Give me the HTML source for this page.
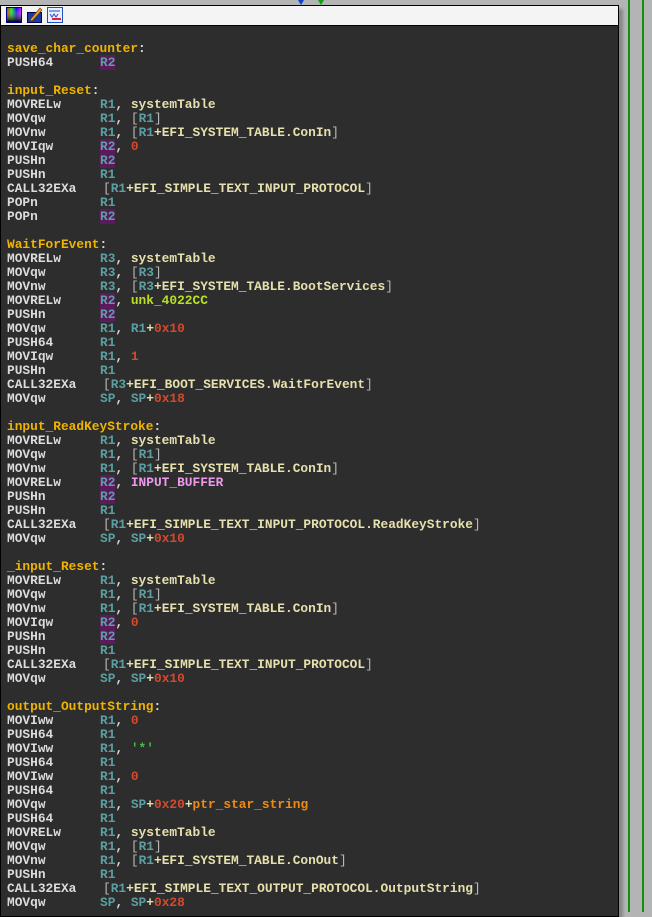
<!DOCTYPE html>
<html><head><meta charset="utf-8"><style>
html,body{margin:0;padding:0;width:652px;height:912px;overflow:hidden;background:#b4b4b4;}
#win{position:absolute;left:0;top:5px;width:617px;height:910px;border:1px solid #000;background:#2d2d2d;box-shadow:4px 4px 3px rgba(0,0,0,0.25);overflow:hidden;}
#bar{position:absolute;left:0;top:0;width:617px;height:19px;background:#f4f4f4;border-bottom:1px solid #000;}
.g{position:absolute;top:0;width:2px;height:912px;background:#109010;}
#code{position:absolute;left:6px;top:36px;font-family:"Liberation Mono",monospace;font-weight:bold;font-size:12.85px;line-height:14px;color:#dcdcdc;}
.ln{height:14px;white-space:pre;}
.m{display:inline-block;width:93px;}
.c{padding-left:3px;}
.l{color:#f0b400;}
.r{color:#5c9fa2;}
.p{color:#5c9fa2;background:#5a1a5c;}
.n{color:#d5492c;}
.s{color:#e6e0ae;}
.o{color:#f08a10;}
.k{color:#ee99ee;}
.u{color:#b8e020;}
.q{color:#40c040;}
.w{color:#b8b8b8;font-weight:normal;}
</style></head><body>
<div class="g" style="left:628px"></div>
<div class="g" style="left:642px"></div>
<div style="position:absolute;left:298px;top:0;width:0;height:0;border-left:3px solid transparent;border-right:3px solid transparent;border-top:5px solid #1040d0"></div>
<div style="position:absolute;left:318px;top:0;width:0;height:0;border-left:3px solid transparent;border-right:3px solid transparent;border-top:5px solid #10a010"></div>
<div id="win"><div id="bar">
<svg width="70" height="19" style="position:absolute;left:0;top:0">
<defs><linearGradient id="h" x1="0" x2="1"><stop offset="0" stop-color="#f00"/><stop offset=".33" stop-color="#0f0"/><stop offset=".66" stop-color="#00f"/><stop offset="1" stop-color="#f0f"/></linearGradient><linearGradient id="v" x1="0" y1="0" x2="0" y2="1"><stop offset="0" stop-color="#fff" stop-opacity="0"/><stop offset="1" stop-color="#000"/></linearGradient></defs>
<rect x="5.5" y="1.5" width="15" height="15" fill="url(#h)" stroke="#000080"/>
<rect x="6" y="2" width="14" height="14" fill="url(#v)"/>
<rect x="26.5" y="6.5" width="14" height="10" fill="#1a3aa0" stroke="#000060"/>
<path d="M29 14 L39 2 L41 4 L31 15 Z" fill="#f0a030" stroke="#704000" stroke-width=".6"/>
<rect x="46.5" y="1.5" width="15" height="15" fill="#e8f0ff" stroke="#2050c0"/>
<path d="M48 5h11M49 8l2 3 2-3 2 3 2-3" stroke="#2050c0" fill="none"/>
<rect x="51" y="12" width="9" height="2" fill="#e02040"/>
</svg></div>
<div id="code">
<div class="ln"><span class="l">save_char_counter</span>:</div>
<div class="ln"><span class="m">PUSH64</span><span class="p">R2</span></div>
<div class="ln"></div>
<div class="ln"><span class="l">input_Reset</span>:</div>
<div class="ln"><span class="m">MOVRELw</span><span class="r">R1</span>, <span class="s">systemTable</span></div>
<div class="ln"><span class="m">MOVqw</span><span class="r">R1</span>, <span class="w">[</span><span class="r">R1</span><span class="w">]</span></div>
<div class="ln"><span class="m">MOVnw</span><span class="r">R1</span>, <span class="w">[</span><span class="r">R1</span><span class="s">+EFI_SYSTEM_TABLE.ConIn</span><span class="w">]</span></div>
<div class="ln"><span class="m">MOVIqw</span><span class="p">R2</span>, <span class="n">0</span></div>
<div class="ln"><span class="m">PUSHn</span><span class="p">R2</span></div>
<div class="ln"><span class="m">PUSHn</span><span class="r">R1</span></div>
<div class="ln"><span class="m">CALL32EXa</span><span class="c"><span class="w">[</span><span class="r">R1</span><span class="s">+EFI_SIMPLE_TEXT_INPUT_PROTOCOL</span><span class="w">]</span></span></div>
<div class="ln"><span class="m">POPn</span><span class="r">R1</span></div>
<div class="ln"><span class="m">POPn</span><span class="p">R2</span></div>
<div class="ln"></div>
<div class="ln"><span class="l">WaitForEvent</span>:</div>
<div class="ln"><span class="m">MOVRELw</span><span class="r">R3</span>, <span class="s">systemTable</span></div>
<div class="ln"><span class="m">MOVqw</span><span class="r">R3</span>, <span class="w">[</span><span class="r">R3</span><span class="w">]</span></div>
<div class="ln"><span class="m">MOVnw</span><span class="r">R3</span>, <span class="w">[</span><span class="r">R3</span><span class="s">+EFI_SYSTEM_TABLE.BootServices</span><span class="w">]</span></div>
<div class="ln"><span class="m">MOVRELw</span><span class="p">R2</span>, <span class="u">unk_4022CC</span></div>
<div class="ln"><span class="m">PUSHn</span><span class="p">R2</span></div>
<div class="ln"><span class="m">MOVqw</span><span class="r">R1</span>, <span class="r">R1</span><span class="s">+</span><span class="n">0x10</span></div>
<div class="ln"><span class="m">PUSH64</span><span class="r">R1</span></div>
<div class="ln"><span class="m">MOVIqw</span><span class="r">R1</span>, <span class="n">1</span></div>
<div class="ln"><span class="m">PUSHn</span><span class="r">R1</span></div>
<div class="ln"><span class="m">CALL32EXa</span><span class="c"><span class="w">[</span><span class="r">R3</span><span class="s">+EFI_BOOT_SERVICES.WaitForEvent</span><span class="w">]</span></span></div>
<div class="ln"><span class="m">MOVqw</span><span class="r">SP</span>, <span class="r">SP</span><span class="s">+</span><span class="n">0x18</span></div>
<div class="ln"></div>
<div class="ln"><span class="l">input_ReadKeyStroke</span>:</div>
<div class="ln"><span class="m">MOVRELw</span><span class="r">R1</span>, <span class="s">systemTable</span></div>
<div class="ln"><span class="m">MOVqw</span><span class="r">R1</span>, <span class="w">[</span><span class="r">R1</span><span class="w">]</span></div>
<div class="ln"><span class="m">MOVnw</span><span class="r">R1</span>, <span class="w">[</span><span class="r">R1</span><span class="s">+EFI_SYSTEM_TABLE.ConIn</span><span class="w">]</span></div>
<div class="ln"><span class="m">MOVRELw</span><span class="p">R2</span>, <span class="k">INPUT_BUFFER</span></div>
<div class="ln"><span class="m">PUSHn</span><span class="p">R2</span></div>
<div class="ln"><span class="m">PUSHn</span><span class="r">R1</span></div>
<div class="ln"><span class="m">CALL32EXa</span><span class="c"><span class="w">[</span><span class="r">R1</span><span class="s">+EFI_SIMPLE_TEXT_INPUT_PROTOCOL.ReadKeyStroke</span><span class="w">]</span></span></div>
<div class="ln"><span class="m">MOVqw</span><span class="r">SP</span>, <span class="r">SP</span><span class="s">+</span><span class="n">0x10</span></div>
<div class="ln"></div>
<div class="ln"><span class="l">_input_Reset</span>:</div>
<div class="ln"><span class="m">MOVRELw</span><span class="r">R1</span>, <span class="s">systemTable</span></div>
<div class="ln"><span class="m">MOVqw</span><span class="r">R1</span>, <span class="w">[</span><span class="r">R1</span><span class="w">]</span></div>
<div class="ln"><span class="m">MOVnw</span><span class="r">R1</span>, <span class="w">[</span><span class="r">R1</span><span class="s">+EFI_SYSTEM_TABLE.ConIn</span><span class="w">]</span></div>
<div class="ln"><span class="m">MOVIqw</span><span class="p">R2</span>, <span class="n">0</span></div>
<div class="ln"><span class="m">PUSHn</span><span class="p">R2</span></div>
<div class="ln"><span class="m">PUSHn</span><span class="r">R1</span></div>
<div class="ln"><span class="m">CALL32EXa</span><span class="c"><span class="w">[</span><span class="r">R1</span><span class="s">+EFI_SIMPLE_TEXT_INPUT_PROTOCOL</span><span class="w">]</span></span></div>
<div class="ln"><span class="m">MOVqw</span><span class="r">SP</span>, <span class="r">SP</span><span class="s">+</span><span class="n">0x10</span></div>
<div class="ln"></div>
<div class="ln"><span class="l">output_OutputString</span>:</div>
<div class="ln"><span class="m">MOVIww</span><span class="r">R1</span>, <span class="n">0</span></div>
<div class="ln"><span class="m">PUSH64</span><span class="r">R1</span></div>
<div class="ln"><span class="m">MOVIww</span><span class="r">R1</span>, <span class="q">'*'</span></div>
<div class="ln"><span class="m">PUSH64</span><span class="r">R1</span></div>
<div class="ln"><span class="m">MOVIww</span><span class="r">R1</span>, <span class="n">0</span></div>
<div class="ln"><span class="m">PUSH64</span><span class="r">R1</span></div>
<div class="ln"><span class="m">MOVqw</span><span class="r">R1</span>, <span class="r">SP</span><span class="s">+</span><span class="n">0x20</span><span class="s">+</span><span class="o">ptr_star_string</span></div>
<div class="ln"><span class="m">PUSH64</span><span class="r">R1</span></div>
<div class="ln"><span class="m">MOVRELw</span><span class="r">R1</span>, <span class="s">systemTable</span></div>
<div class="ln"><span class="m">MOVqw</span><span class="r">R1</span>, <span class="w">[</span><span class="r">R1</span><span class="w">]</span></div>
<div class="ln"><span class="m">MOVnw</span><span class="r">R1</span>, <span class="w">[</span><span class="r">R1</span><span class="s">+EFI_SYSTEM_TABLE.ConOut</span><span class="w">]</span></div>
<div class="ln"><span class="m">PUSHn</span><span class="r">R1</span></div>
<div class="ln"><span class="m">CALL32EXa</span><span class="c"><span class="w">[</span><span class="r">R1</span><span class="s">+EFI_SIMPLE_TEXT_OUTPUT_PROTOCOL.OutputString</span><span class="w">]</span></span></div>
<div class="ln"><span class="m">MOVqw</span><span class="r">SP</span>, <span class="r">SP</span><span class="s">+</span><span class="n">0x28</span></div>
</div></div>
</body></html>
